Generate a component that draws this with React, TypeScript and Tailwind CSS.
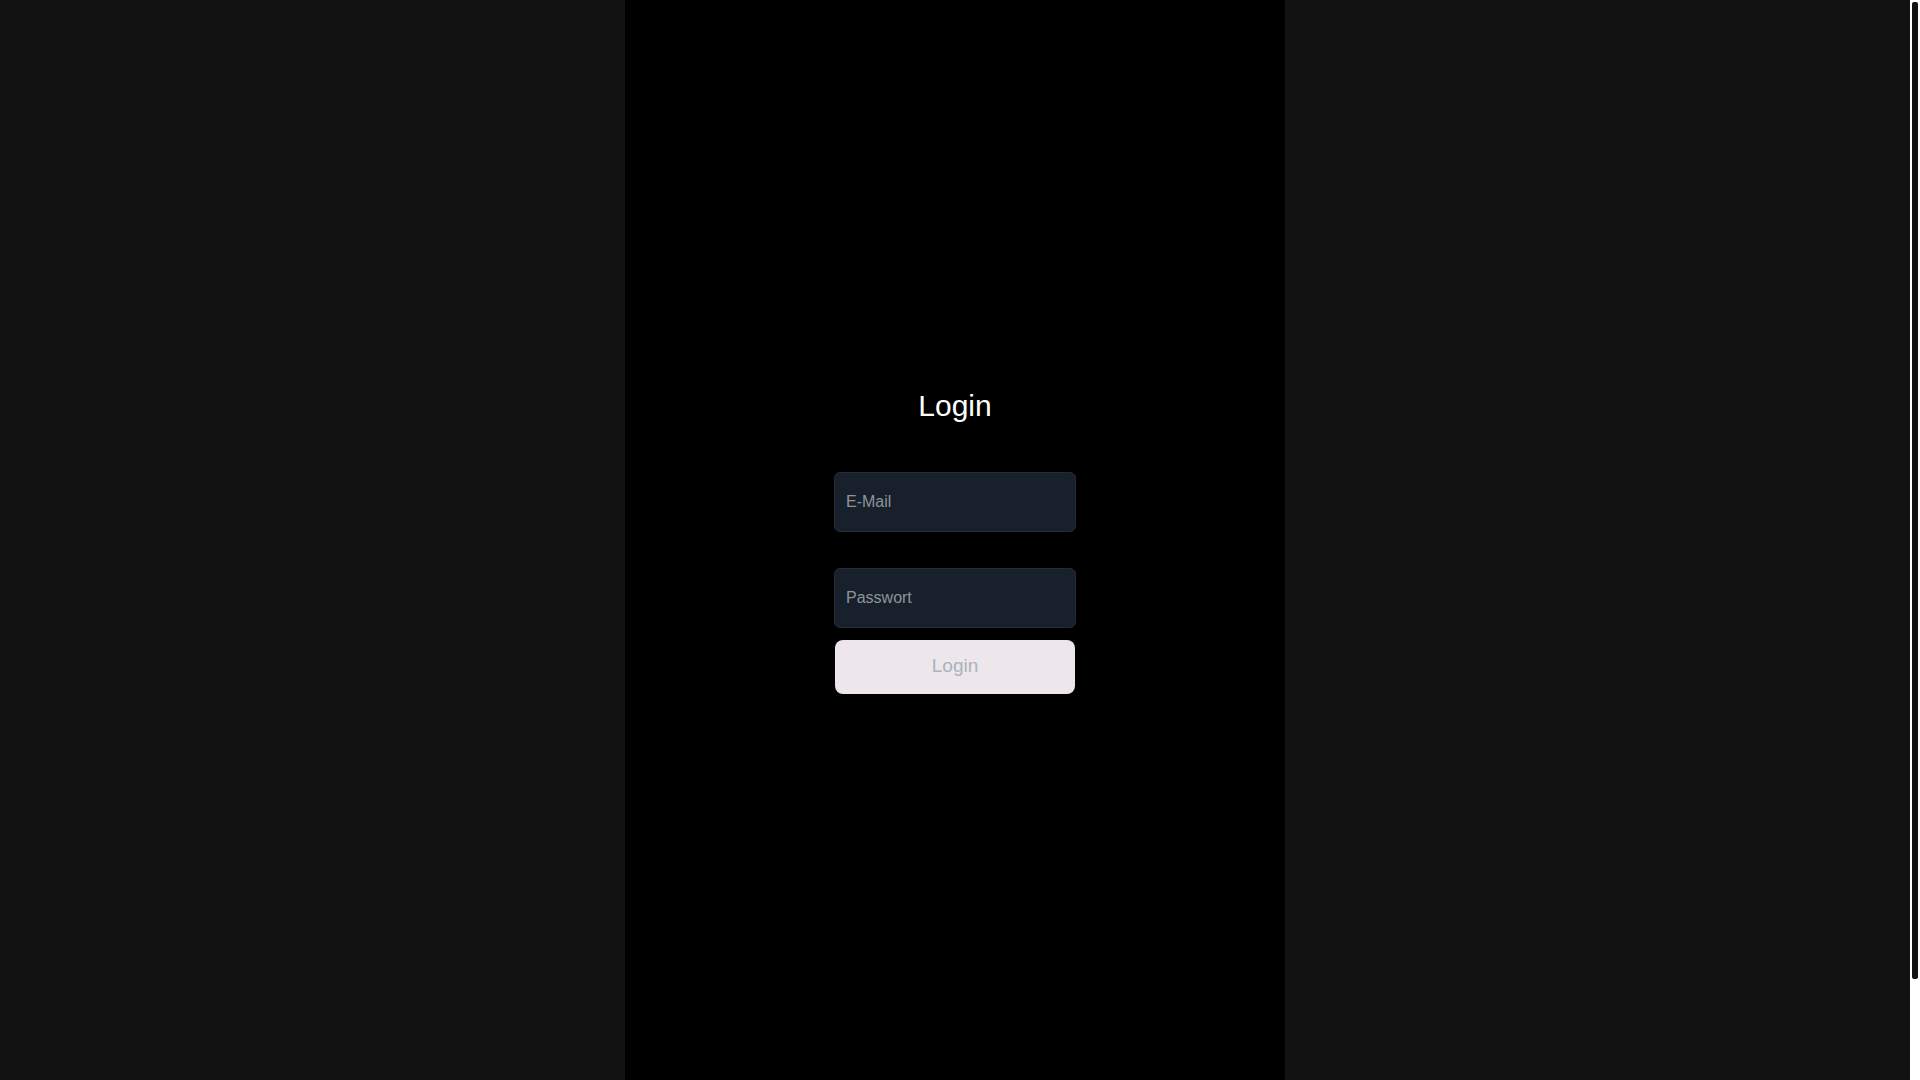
export default function App() {
  return (
    <div
      className="h-screen flex bg-[#121212] overflow-hidden"
      style={{ fontFamily: '"Liberation Sans", Arial, sans-serif' }}
    >
      <main className="flex-1 flex justify-center">
        <div className="w-[660px] h-full bg-black flex flex-col items-center justify-center pt-[4px]">
          <h1 className="text-[30px] leading-none text-white">Login</h1>
          <form className="mt-[51px] flex flex-col items-center">
            <input
              type="email"
              placeholder="E-Mail"
              className="w-[242px] h-[60px] px-[11px] rounded-md border border-[#232d3a] bg-[#17202b] text-base text-white placeholder:text-[#8d949c] outline-none"
            />
            <input
              type="password"
              placeholder="Passwort"
              className="mt-9 w-[242px] h-[60px] px-[11px] rounded-md border border-[#232d3a] bg-[#17202b] text-base text-white placeholder:text-[#8d949c] outline-none"
            />
            <button
              type="button"
              disabled
              className="mt-3 w-[240px] h-[54px] rounded-lg bg-[#ede6ea] text-[19px] text-[#a9b4bc]"
            >
              Login
            </button>
          </form>
        </div>
      </main>
      {/* scrollbar */}
      <div className="w-[10px] h-full bg-white px-[2px] pt-[2px]">
        <div className="h-[977px] rounded-[2px] bg-[#121212]" />
      </div>
    </div>
  )
}
